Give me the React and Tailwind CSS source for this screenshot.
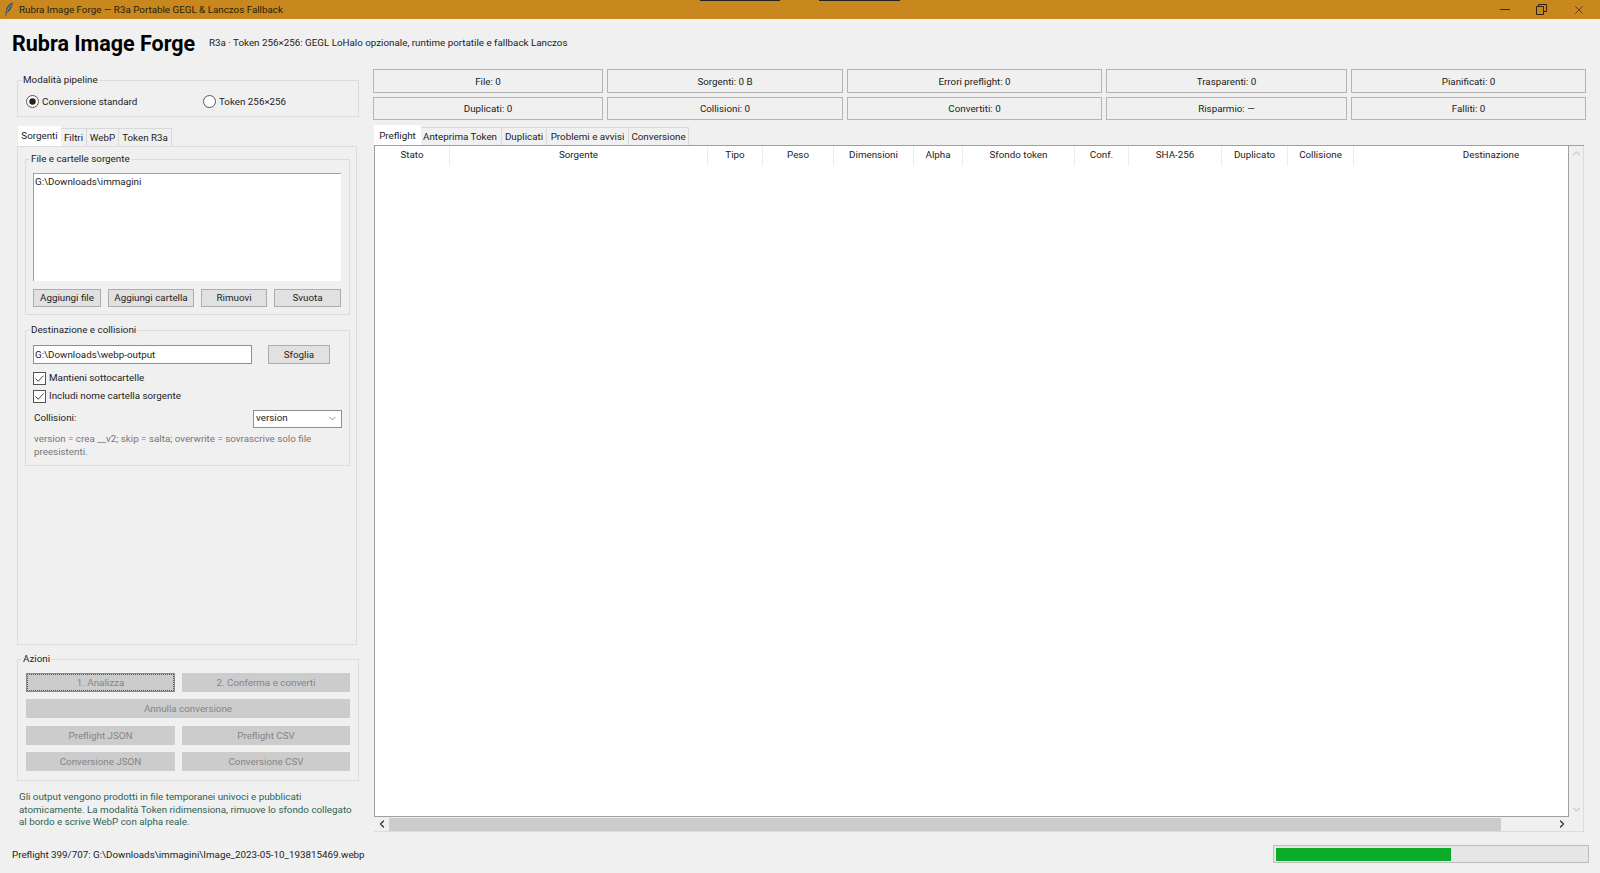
import { ChevronDown, ChevronLeft, ChevronRight, ChevronUp, X } from 'lucide-react'

const statRows = [
  ['File: 0', 'Sorgenti: 0 B', 'Errori preflight: 0', 'Trasparenti: 0', 'Pianificati: 0'],
  ['Duplicati: 0', 'Collisioni: 0', 'Convertiti: 0', 'Risparmio: —', 'Falliti: 0'],
]

const columns = [
  ['Stato', 'w-[75px]'],
  ['Sorgente', 'w-[258px]'],
  ['Tipo', 'w-[55px]'],
  ['Peso', 'w-[71px]'],
  ['Dimensioni', 'w-[80px]'],
  ['Alpha', 'w-[49px]'],
  ['Sfondo token', 'w-[112px]'],
  ['Conf.', 'w-[54px]'],
  ['SHA-256', 'w-[93px]'],
  ['Duplicato', 'w-[66px]'],
  ['Collisione', 'w-[66px]'],
  ['Destinazione', 'flex-1 pl-[60px]'],
]

const leftTabs = [
  ['Sorgenti', 'w-[43px] pt-px', true],
  ['Filtri', 'w-[26px] pt-px'],
  ['WebP', 'w-[32px] pt-px'],
  ['Token R3a', 'w-[53px] pt-px'],
]

const rightTabs = [
  ['Preflight', 'w-[47px] pt-[2px]', true],
  ['Anteprima Token', 'w-[81px] pt-[2px] pr-[2px]'],
  ['Duplicati', 'w-[45px] pt-[2px]'],
  ['Problemi e avvisi', 'w-[82px] pt-[2px]'],
  ['Conversione', 'w-[60px] pt-[2px]'],
]

const Tabs = ({ items }) => (
  <div className="flex h-[20px] items-end">
    {items.map(([label, width, active]) => (
      <div
        key={label}
        className={
          active
            ? `${width} flex h-[20px] items-center justify-center whitespace-nowrap bg-white text-[#1c1c1c]`
            : `${width} flex h-[18px] items-center justify-center whitespace-nowrap border border-b-0 border-l-0 border-[#d9d9d9] bg-[#f0f0f0] text-[#222]`
        }
      >
        {label}
      </div>
    ))}
  </div>
)

const Group = ({ title, className, children }) => (
  <fieldset className={`border border-[#dcdcdc] ${className}`}>
    <legend className="ml-[4px] h-[14px] px-px leading-[14px] text-[#222]">{title}</legend>
    {children}
  </fieldset>
)

const Button = ({ className, children }) => (
  <div className={`flex items-center justify-center border border-[#adadad] bg-[#e1e1e1] pt-px text-[#1c1c1c] ${className}`}>
    {children}
  </div>
)

const Disabled = ({ className, children }) => (
  <div className={`flex h-[19px] items-center justify-center bg-[#cccccc] pt-[2px] text-[#858585] ${className}`}>
    {children}
  </div>
)

const Check = ({ label, className }) => (
  <div className={`flex h-[17px] items-center ${className}`}>
    <svg width="13" height="13" viewBox="0 0 13 13" className="ml-[7px] mr-[3px]">
      <rect x="0.5" y="0.5" width="12" height="12" fill="#fff" stroke="#555" />
      <path d="M2.5 6.5 5.2 9.3 10.5 3.6" fill="none" stroke="#444" strokeWidth="1" />
    </svg>
    <span>{label}</span>
  </div>
)

const Feather = () => (
  <svg width="10" height="15" viewBox="0 0 10 15" className="ml-[4px] mr-[5px]">
    <path d="M8.8 0.6C5 1.4 2.4 5 1.8 9.2L1.3 14.2 2.1 14.2 2.9 10.6C6.2 9.6 8.4 5 8.8 0.6Z" fill="#3d5266" />
    <path d="M7.6 2.4C5.6 4 4 6.6 3.2 9.4" fill="none" stroke="#a9bccd" strokeWidth="0.7" />
  </svg>
)

const App = () => {
  return (
    <div className="flex h-[873px] w-[1600px] flex-col overflow-hidden bg-[#f0f0f0] font-['Roboto','Noto_Sans',sans-serif] text-[9.8px] text-[#222]">
      <div className="relative flex h-[19px] shrink-0 items-center bg-[#c8881d]">
        <Feather />
        <span className="pt-[2px] text-[#26200f]">Rubra Image Forge — R3a Portable GEGL &amp; Lanczos Fallback</span>
        <div className="absolute left-[700px] top-0 h-px w-[80px] bg-[#222]" />
        <div className="absolute left-[819px] top-0 h-px w-[81px] bg-[#222]" />
        <div className="ml-auto flex items-center">
          <div className="h-px w-[10px] bg-[#3a2c10]" />
          <svg width="11" height="11" viewBox="0 0 11 11" className="ml-[26px]">
            <path d="M0.5 2.5h7v8h-7zM2.5 2.5v-2h8v7h-2.5" fill="none" stroke="#2f2410" />
          </svg>
          <X size={14} strokeWidth={1.2} className="ml-[25px] mr-[14px] text-[#2f2410]" />
        </div>
      </div>

      <div className="flex h-[50px] shrink-0 items-center pl-3">
        <span className="w-[197px] whitespace-nowrap text-[21.5px] font-bold leading-none text-black">Rubra Image Forge</span>
        <span className="-mt-[2px]">R3a · Token 256×256: GEGL LoHalo opzionale, runtime portatile e fallback Lanczos</span>
      </div>

      <div className="flex min-h-0 flex-1">
        <div className="flex w-[373px] shrink-0 flex-col pl-[17px] pt-[4px]">
          <Group title="Modalità pipeline" className="h-[44px] w-[342px]">
            <div className="flex h-[29px] items-center pl-[7px]">
              <svg width="13" height="13" viewBox="0 0 13 13" className="ml-[1px] mr-[3px]">
                <circle cx="6.5" cy="6.5" r="6" fill="#fff" stroke="#555" />
                <circle cx="6.5" cy="6.5" r="3.2" fill="#222" />
              </svg>
              <span className="w-[161px] pt-px">Conversione standard</span>
              <svg width="13" height="13" viewBox="0 0 13 13" className="mr-[3px]">
                <circle cx="6.5" cy="6.5" r="6" fill="#fff" stroke="#555" />
              </svg>
              <span className="pt-px">Token 256×256</span>
            </div>
          </Group>

          <div className="mt-[9px] ml-px">
            <Tabs items={leftTabs} />
          </div>

          <div className="h-[499px] w-[340px] border border-[#dcdcdc] pl-[7px] pt-[5px]">
            <Group title="File e cartelle sorgente" className="h-[163px] w-[325px]">
              <div className="ml-[7px] mt-[7px] h-[108px] w-[308px] border-l border-t border-[#a0a0a0] bg-white pl-[1px] pt-[1px] leading-[13px]">
                G:\Downloads\immagini
              </div>
              <div className="ml-[7px] mt-[8px] flex">
                <Button className="h-[18px] w-[68px]">Aggiungi file</Button>
                <Button className="ml-[7px] h-[18px] w-[86px]">Aggiungi cartella</Button>
                <Button className="ml-[7px] h-[18px] w-[66px]">Rimuovi</Button>
                <Button className="ml-[7px] h-[18px] w-[67px]">Svuota</Button>
              </div>
            </Group>

            <Group title="Destinazione e collisioni" className="mt-[8px] h-[143px] w-[325px]">
              <div className="mt-[8px] flex pl-[7px]">
                <div className="flex h-[19px] w-[219px] items-center border border-[#8f8f8f] bg-white pl-[1px] pt-px">G:\Downloads\webp-output</div>
                <Button className="ml-[16px] h-[19px] w-[62px]">Sfoglia</Button>
              </div>
              <div className="mt-[6px]">
                <Check label="Mantieni sottocartelle" />
                <Check label="Includi nome cartella sorgente" className="mt-px" />
              </div>
              <div className="mt-[4px] flex h-[19px] items-center justify-between pl-[8px] pr-[7px]">
                <span>Collisioni:</span>
                <div className="flex h-[18px] w-[89px] items-center justify-between border border-[#8f8f8f] bg-white pl-[2px] pr-[3px]">
                  <span>version</span>
                  <ChevronDown size={11} strokeWidth={1.2} className="text-[#444]" />
                </div>
              </div>
              <p className="mt-[5px] pl-[8px] pr-[20px] leading-[12.5px] text-[#777]">
                version = crea __v2; skip = salta; overwrite = sovrascrive solo file preesistenti.
              </p>
            </Group>
          </div>

          <Group title="Azioni" className="mt-[7px] h-[129px] w-[342px]">
            <div className="ml-[8px] mt-[7px] flex gap-[7px]">
              <Disabled className="w-[149px] outline-1 -outline-offset-2 outline-dotted outline-[#555] border border-[#8b8b8b]">1. Analizza</Disabled>
              <Disabled className="w-[168px]">2. Conferma e converti</Disabled>
            </div>
            <Disabled className="ml-[8px] mt-[7px] w-[324px]">Annulla conversione</Disabled>
            <div className="ml-[8px] mt-[8px] flex gap-[7px]">
              <Disabled className="w-[149px]">Preflight JSON</Disabled>
              <Disabled className="w-[168px]">Preflight CSV</Disabled>
            </div>
            <div className="ml-[8px] mt-[7px] flex gap-[7px]">
              <Disabled className="w-[149px]">Conversione JSON</Disabled>
              <Disabled className="w-[168px]">Conversione CSV</Disabled>
            </div>
          </Group>

          <p className="mt-[10px] w-[341px] pl-[2px] leading-[12.5px] text-[#2f6353]">
            Gli output vengono prodotti in file temporanei univoci e pubblicati atomicamente. La modalità Token ridimensiona, rimuove lo sfondo collegato al bordo e scrive WebP con alpha reale.
          </p>
        </div>

        <div className="flex min-w-0 flex-1 flex-col pr-[14px]">
          <div className="grid grid-cols-[230px_236px_255px_241px_235px] grid-rows-[24px_23px] gap-x-[4px] gap-y-[4px]">
            {statRows.flat().map((stat) => (
              <div key={stat} className="flex items-center justify-center border border-[#b4b4b4] pt-[2px] text-[#222]">
                {stat}
              </div>
            ))}
          </div>

          <div className="ml-px mt-[5px] flex w-[1210px] flex-col">
            <Tabs items={rightTabs} />
            <div className="flex h-[672px] border-t border-[#a0a0a0]">
              <div className="flex h-[671px] w-[1195px] flex-col border-b border-l border-r border-[#a0a0a0] bg-white">
                <div className="flex h-[20px] text-[#222]">
                  {columns.map(([name, width]) => (
                    <div key={name} className={`${width} flex items-center justify-center border-r border-[#ececec] pb-[1px] last:border-r-0`}>
                      {name}
                    </div>
                  ))}
                </div>
              </div>
              <div className="flex w-[15px] flex-col items-center justify-between border-r border-[#dcdcdc] py-[1px] text-[#a8a8a8]">
                <ChevronUp size={13} strokeWidth={1.5} />
                <ChevronDown size={13} strokeWidth={1.5} />
              </div>
            </div>
            <div className="flex h-[15px] items-center border-b border-r border-[#dcdcdc]">
              <div className="flex w-[15px] justify-center text-[#333]">
                <ChevronLeft size={12} strokeWidth={2.5} />
              </div>
              <div className="h-[13px] w-[1112px] bg-[#cccccc]" />
              <div className="flex flex-1 justify-end pr-[15px] text-[#333]">
                <ChevronRight size={12} strokeWidth={2.5} />
              </div>
            </div>
          </div>
        </div>
      </div>

      <div className="flex h-[38px] shrink-0 items-center justify-between pl-3 pr-[11px]">
        <span className="pt-[3px] text-[#1c1c1c]">Preflight 399/707: G:\Downloads\immagini\Image_2023-05-10_193815469.webp</span>
        <div className="flex h-[18px] w-[316px] items-center border border-[#bcbcbc] bg-[#e6e6e6] px-[2px]">
          <div className="h-[13px] bg-[#0cac2a]" style={{ width: `${(399 / 707) * 100}%` }} />
        </div>
      </div>
    </div>
  )
}

export default App
